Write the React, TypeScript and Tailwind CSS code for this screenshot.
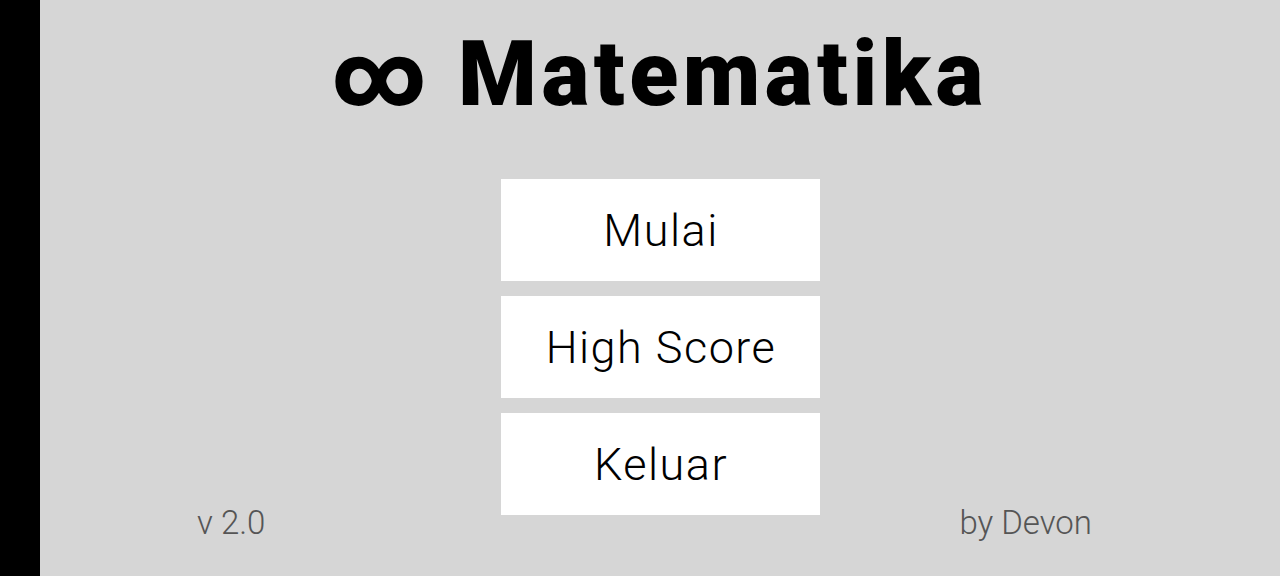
import React from 'react';

const menuItems = ['Mulai', 'High Score', 'Keluar'];

const MenuButton: React.FC<{ label: string }> = ({ label }) => (
  <button className="h-[102px] w-[319px] bg-white pl-[2px] text-[45px] font-light leading-none tracking-[1.5px] text-black">
    {label}
  </button>
);

export default function App() {
  return (
    <div
      className="flex h-[576px] w-[1280px] overflow-hidden bg-[#d6d6d6]"
      style={{ fontFamily: 'Roboto, "Noto Sans", sans-serif' }}
    >
      {/* left edge bar */}
      <div className="w-[40px] shrink-0 bg-black" />

      <main className="flex flex-1 flex-col">
        <h1 className="pr-[1px] pt-[30px] text-center text-[90px] font-black leading-none tracking-[4.5px] text-black">
          ∞ Matematika
        </h1>

        <div className="mt-[59px] grid grid-cols-[1fr_319px_1fr]">
          <div className="self-end pl-[157px] text-[33px] font-light leading-none text-[#555]">v 2.0</div>

          <div className="flex flex-col gap-[15px] pb-[24px]">
            {menuItems.map((item) => (
              <MenuButton key={item} label={item} />
            ))}
          </div>

          <div className="flex justify-end self-end pr-[188px] text-[33px] font-light leading-none text-[#555]">
            by Devon
          </div>
        </div>
      </main>
    </div>
  );
}
